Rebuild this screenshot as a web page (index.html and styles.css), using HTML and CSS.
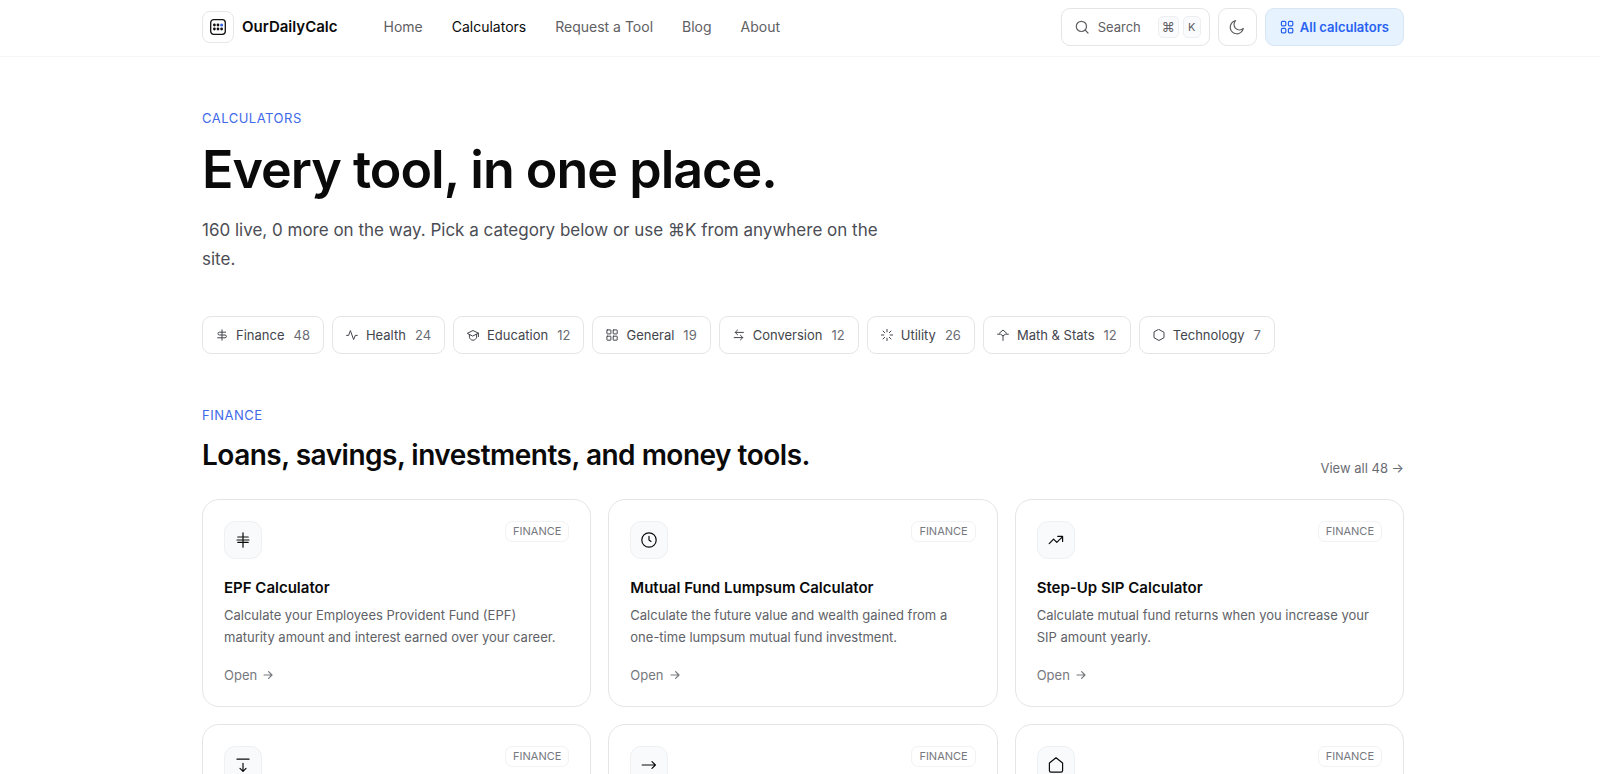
FILE: index.html
```html
<!DOCTYPE html>
<html lang="en">
<head>
<meta charset="utf-8">
<meta name="viewport" content="width=device-width, initial-scale=1">
<title>Calculators – OurDailyCalc</title>
<link rel="stylesheet" href="styles.css">
</head>
<body>
<header class="site-header">
  <div class="container header-row">
    <a class="brand" href="#">
      <span class="brand-mark">
        <svg class="icon-18" viewBox="0 0 18 18" fill="none" aria-hidden="true"><rect x="1.7" y="1.7" width="14.6" height="14.6" rx="3" stroke="#111" stroke-width="1.3"/><g fill="#111"><circle cx="5.4" cy="7" r="1.4"/><circle cx="9" cy="7" r="1.4"/><circle cx="5.4" cy="11" r="1.4"/><circle cx="9" cy="11" r="1.4"/><circle cx="12.6" cy="11" r="1.4"/></g><circle cx="12.6" cy="7" r="1.5" fill="#2f62ee"/></svg>
      </span>
      OurDailyCalc
    </a>
    <nav class="main-nav" aria-label="Main">
      <a href="#">Home</a>
      <a class="active" href="#" aria-current="page">Calculators</a>
      <a href="#">Request a Tool</a>
      <a href="#">Blog</a>
      <a href="#">About</a>
    </nav>
    <div class="header-actions">
      <button class="btn search-btn" type="button">
        <svg class="icon-14" viewBox="0 0 14 14" aria-hidden="true"><circle cx="6.4" cy="6.4" r="5.1"/><path d="M10.2 10.2 13 13"/></svg>
        <span>Search</span>
        <span class="keys"><kbd>⌘</kbd><kbd>K</kbd></span>
      </button>
      <button class="btn theme-btn" type="button" aria-label="Toggle theme">
        <svg class="icon-16" viewBox="0 0 16 16" aria-hidden="true"><path d="M14.3 9.4A6.6 6.6 0 1 1 6.6 1.7a5.3 5.3 0 0 0 7.7 7.7Z"/></svg>
      </button>
      <a class="btn all-btn" href="#">
        <svg class="icon-14" viewBox="0 0 14 14" aria-hidden="true"><rect x="1.4" y="1.4" width="4.4" height="4.4" rx="1"/><rect x="8.4" y="1.4" width="4.4" height="4.4" rx="1"/><rect x="1.4" y="8.4" width="4.4" height="4.4" rx="1"/><rect x="8.4" y="8.4" width="4.4" height="4.4" rx="1"/></svg>
        All calculators
      </a>
    </div>
  </div>
</header>

<main class="container">
  <section class="hero">
    <p class="eyebrow">CALCULATORS</p>
    <h1>Every tool, in one place.</h1>
    <p class="lead">160 live, 0 more on the way. Pick a category below or use ⌘K from anywhere on the site.</p>
  </section>

  <nav class="chips" aria-label="Categories">
    <a class="chip" href="#"><svg class="icon-12" viewBox="0 0 12 12" aria-hidden="true"><path d="M6 .8v10.400M9.600 3.200H3.400a1.400 1.400 0 0 0 0 2.800H9a1.400 1.400 0 0 1 0 2.800H1.600"/></svg>Finance<span class="count">48</span></a>
    <a class="chip" href="#"><svg class="icon-12" viewBox="0 0 12 12" aria-hidden="true"><path d="M.6 6.4h2L4.4 1.6l3.2 9 1.7-4.2h2"/></svg>Health<span class="count">24</span></a>
    <a class="chip" href="#"><svg class="icon-12" viewBox="0 0 12 12" aria-hidden="true"><path d="M.6 4.2 6 1.5l5.4 2.7L6 6.9ZM2.4 5.4v2.8C2.8 10 4.2 11.2 6 11.2s3.200-1.200 3.600-3V5.400M11.400 4.200v3.400"/></svg>Education<span class="count">12</span></a>
    <a class="chip" href="#"><svg class="icon-12" viewBox="0 0 12 12" aria-hidden="true"><rect x=".9" y=".9" width="4" height="4" rx=".4"/><rect x="7.200" y=".9" width="4" height="4" rx=".4"/><rect x=".9" y="7.200" width="4" height="4" rx=".4"/><rect x="7.200" y="7.200" width="4" height="4" rx=".4"/></svg>General<span class="count">19</span></a>
    <a class="chip" href="#"><svg class="icon-12" viewBox="0 0 12 12" aria-hidden="true"><path d="M10.400 3.400H2.200M4.600 1 2.200 3.400 4.600 5.800M1.200 8.600h8.600M7.400 6.200l2.400 2.400L7.400 11"/></svg>Conversion<span class="count">12</span></a>
    <a class="chip" href="#"><svg class="icon-12" viewBox="0 0 12 12" aria-hidden="true"><path d="M6 .4v2.400M6 9.200v2.400M.4 6h2.400M9.200 6h2.400M2 2l1.700 1.700M8.300 8.300 10 10M2 10l1.700-1.700M8.300 3.700 10 2"/></svg>Utility<span class="count">26</span></a>
    <a class="chip" href="#"><svg class="icon-12" viewBox="0 0 12 12" aria-hidden="true"><path d="M.6 5.200h3L6 7l2.400-1.800h3M2.400 4.200 6 1l3.600 3.200M6 7v4.400"/></svg>Math &amp; Stats<span class="count">12</span></a>
    <a class="chip" href="#"><svg class="icon-12" viewBox="0 0 12 12" aria-hidden="true"><path d="M6 .5l5 2.800v5.400l-5 2.800-5-2.800V3.300Z"/></svg>Technology<span class="count">7</span></a>
  </nav>

  <section class="category">
    <div class="category-head">
      <div>
        <p class="eyebrow">FINANCE</p>
        <h2>Loans, savings, investments, and money tools.</h2>
      </div>
      <a class="view-all" href="#">View all 48 →</a>
    </div>
    <div class="cards">
      <a class="card" href="#">
        <span class="card-top"><span class="tile"><svg class="icon-16" viewBox="0 0 16 16" aria-hidden="true"><path d="M8 .8v14.400M2.800 5h10.400M2 8h12M2.800 10.400h10.400"/></svg></span><span class="tag">FINANCE</span></span>
        <h3>EPF Calculator</h3>
        <p>Calculate your Employees Provident Fund (EPF) maturity amount and interest earned over your career.</p>
        <span class="open">Open <svg class="icon-10" viewBox="0 0 10 10" aria-hidden="true"><path d="M1 5h8M5.600 1.600 9 5 5.600 8.400"/></svg></span>
      </a>
      <a class="card" href="#">
        <span class="card-top"><span class="tile"><svg class="icon-16" viewBox="0 0 16 16" aria-hidden="true"><circle cx="8" cy="8" r="7.200"/><path d="M8 4.400V8l2 1.400"/></svg></span><span class="tag">FINANCE</span></span>
        <h3>Mutual Fund Lumpsum Calculator</h3>
        <p>Calculate the future value and wealth gained from a one-time lumpsum mutual fund investment.</p>
        <span class="open">Open <svg class="icon-10" viewBox="0 0 10 10" aria-hidden="true"><path d="M1 5h8M5.600 1.600 9 5 5.600 8.400"/></svg></span>
      </a>
      <a class="card" href="#">
        <span class="card-top"><span class="tile"><svg class="icon-16" viewBox="0 0 16 16" aria-hidden="true"><path d="M1.200 11.600 5.600 7.200l3.200 3.200L14.600 4.600M9.800 4.400h4.800v5"/></svg></span><span class="tag">FINANCE</span></span>
        <h3>Step-Up SIP Calculator</h3>
        <p>Calculate mutual fund returns when you increase your SIP amount yearly.</p>
        <span class="open">Open <svg class="icon-10" viewBox="0 0 10 10" aria-hidden="true"><path d="M1 5h8M5.600 1.600 9 5 5.600 8.400"/></svg></span>
      </a>
      <a class="card" href="#">
        <span class="card-top"><span class="tile"><svg class="icon-16" viewBox="0 0 16 16" aria-hidden="true"><path d="M2 2.200h12M8 6.400v8M5 11.400l3 3 3-3"/></svg></span><span class="tag">FINANCE</span></span>
      </a>
      <a class="card" href="#">
        <span class="card-top"><span class="tile"><svg class="icon-16" viewBox="0 0 16 16" aria-hidden="true"><path d="M1.200 8h13.200M11 4.600 14.400 8 11 11.400"/></svg></span><span class="tag">FINANCE</span></span>
      </a>
      <a class="card" href="#">
        <span class="card-top"><span class="tile"><svg class="icon-16" viewBox="0 0 16 16" aria-hidden="true"><path d="M1.400 6 8 .8 14.600 6v7.600a1.600 1.600 0 0 1-1.600 1.600H3a1.600 1.600 0 0 1-1.600-1.600Z"/></svg></span><span class="tag">FINANCE</span></span>
      </a>
    </div>
  </section>
</main>
</body>
</html>
```
FILE: styles.css
```css
* { box-sizing: border-box; }

body {
  margin: 0;
  background: #fff;
  color: #0a0a0b;
  font-family: Inter, "Liberation Sans", sans-serif;
  font-size: 14px;
  line-height: 22px;
}

a { color: inherit; text-decoration: none; }
h1, h2, h3, p { margin: 0; }

svg {
  flex: none;
  fill: none;
  stroke: currentColor;
  stroke-width: 1.2;
  stroke-linecap: round;
  stroke-linejoin: round;
}
.brand svg g, .brand svg circle { stroke: none; }
.icon-10 { width: 10px; height: 10px; }
.icon-12 { width: 12px; height: 12px; stroke-width: 1; }
.icon-14 { width: 14px; height: 14px; }
.icon-16 { width: 16px; height: 16px; }
.icon-18 { width: 18px; height: 18px; }

.container {
  max-width: 1256px;
  margin: 0 auto;
  padding: 0 24px 0 30px;
}

/* Header */
.site-header { border-bottom: 1px solid #f6f6f7; }
.header-row {
  display: flex;
  align-items: center;
  padding-top: 8px;
  padding-bottom: 10px;
}
.brand {
  display: flex;
  align-items: center;
  gap: 8px;
  font-size: 15px;
  font-weight: 600;
}
.brand-mark {
  display: grid;
  place-items: center;
  width: 32px;
  height: 32px;
  border: 1px solid #e6e7e9;
  border-radius: 8px;
}
.main-nav {
  display: flex;
  gap: 29px;
  margin-left: 46px;
  color: #5f6063;
}
.main-nav .active { color: #0a0a0b; }
.header-actions {
  display: flex;
  gap: 8px;
  margin-left: auto;
}
.btn {
  display: flex;
  align-items: center;
  justify-content: center;
  gap: 9px;
  height: 38px;
  padding: 0 13px;
  border: 1px solid #e4e5e7;
  border-radius: 9px;
  background: #fff;
  color: #5f6063;
  font: inherit;
  font-size: 13px;
}
.search-btn { padding-right: 8px; }
.keys { display: flex; gap: 4px; margin-left: 8px; }
kbd {
  display: grid;
  place-items: center;
  min-width: 18px;
  height: 22px;
  padding: 0 3px;
  border: 1px solid #eceef0;
  border-radius: 5px;
  background: #fafbfc;
  font: 11px/20px Inter, "DejaVu Sans", sans-serif;
}
kbd:first-child { font-size: 13px; }
.theme-btn { width: 39px; padding: 0; }
.all-btn {
  gap: 6px;
  padding: 0 14px;
  border-color: #d8e6f3;
  background: #e6f3fe;
  color: #2962f0;
  font-weight: 600;
}

/* Hero */
.hero { padding-top: 51px; }
.eyebrow {
  color: #4169ea;
  font-size: 13px;
  line-height: 20px;
  letter-spacing: 0.5px;
}
h1 {
  margin-top: 10px;
  font-size: 52px;
  font-weight: 600;
  line-height: 64px;
  letter-spacing: -1px;
}
.lead {
  max-width: 700px;
  margin-top: 14px;
  color: #4b4d55;
  font-size: 17px;
  line-height: 29px;
}

/* Category chips */
.chips {
  display: flex;
  flex-wrap: wrap;
  gap: 8px;
  margin-top: 42px;
}
.chip {
  display: flex;
  align-items: center;
  gap: 8px;
  height: 38px;
  padding: 0 13px;
  border: 1px solid #e4e5e7;
  border-radius: 9px;
  color: #43454c;
  font-size: 13px;
}
.count { margin-left: 1px; color: #6a6c73; }

/* Category section */
.category { padding: 51px 0 64px; }
.category-head {
  display: flex;
  align-items: flex-end;
  justify-content: space-between;
  gap: 24px;
}
h2 {
  margin: 10px 0 4px;
  font-size: 28px;
  font-weight: 600;
  line-height: 40px;
  letter-spacing: -0.5px;
}
.view-all { color: #6a6c73; font-size: 13px; }
.cards {
  display: grid;
  grid-template-columns: repeat(3, 1fr);
  gap: 17px;
  margin-top: 20px;
}
.card {
  display: flex;
  flex-direction: column;
  min-height: 208px;
  padding: 21px;
  border: 1px solid #e4e5e7;
  border-radius: 17px;
}
.card-top {
  display: flex;
  align-items: flex-start;
  justify-content: space-between;
}
.tile {
  display: grid;
  place-items: center;
  width: 38px;
  height: 38px;
  border: 1px solid #eef0f1;
  border-radius: 11px;
  background: #f9fafb;
}
.tag {
  padding: 0 7px;
  border: 1px solid #f1f2f3;
  border-radius: 7px;
  color: #76787e;
  font-size: 11px;
  line-height: 19px;
}
h3 {
  margin-top: 18px;
  font-size: 15px;
  font-weight: 600;
  line-height: 22px;
}
.card p {
  margin-top: 5px;
  color: #606268;
  font-size: 13px;
}
.open {
  display: flex;
  align-items: center;
  gap: 6px;
  margin-top: auto;
  color: #76787e;
  font-size: 13px;
  line-height: 20px;
}
```
